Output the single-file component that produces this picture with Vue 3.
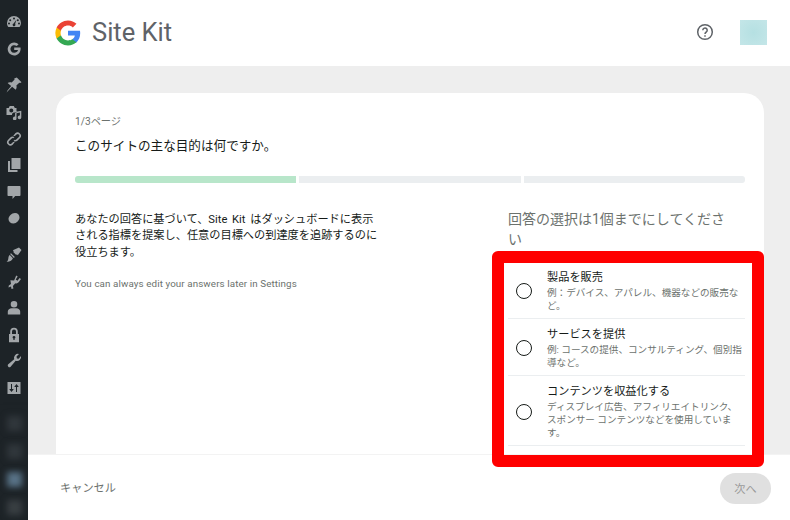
<script setup>
const menuGroups = [
  [
    { name: 'dashboard', d: 'M8 2a7 7 0 0 0-7 7c0 1.6.5 3 1.4 4h11.2A6.9 6.9 0 0 0 15 9a7 7 0 0 0-7-7zM8 3.600a1 1 0 1 1 0 2 1 1 0 0 1 0-2zM4.200 5.200a1 1 0 1 1 0 2 1 1 0 0 1 0-2zm7.600 0a1 1 0 1 1 0 2 1 1 0 0 1 0-2zM3 8.600a1 1 0 1 1 0 2 1 1 0 0 1 0-2zm10 0a1 1 0 1 1 0 2 1 1 0 0 1 0-2zM10.400 5.800l-1.300 4.100a1.400 1.400 0 1 1-1.500-.4z' },
    { name: 'google', d: 'M8.200 1.500a6.500 6.500 0 1 0 4.600 11.100c1.300-1.300 1.800-3.100 1.800-4.800 0-.5 0-.9-.1-1.300H8.200v2.600h3.800c-.4 1.700-1.900 2.700-3.800 2.700a3.800 3.800 0 1 1 2.500-6.700l1.900-1.900a6.400 6.400 0 0 0-4.400-1.700z' }
  ],
  [
    { name: 'pin', d: 'M10.800.5l4.700 4.700-1.300.9-.9-.4-2.900 2.900c.5 1.700.2 3.100-.7 4.100L6.100 9.800 1.500 14.500l-.9.900.9-1.800 3.700-4.700L1.600 6.100c1-1 2.400-1.200 4.100-.7l2.900-2.900-.4-.9z' },
    { name: 'media', d: 'M.5 4h2.200l1-2h4.100l1 2h1.700v4.600H7.800a2.200 2.200 0 0 0-1.800 2.400H.5zM5.300 4.600a2 2 0 1 0 0 4 2 2 0 0 0 0-4zM15.300 6.800v6.500a1.800 1.800 0 1 1-1.400-1.700V8.400l-3.400.8v5.200a1.800 1.800 0 1 1-1.400-1.700V7.900z' },
    { name: 'links', d: 'M9.300 2.300a3.400 3.400 0 0 1 4.800 4.800l-2.400 2.400a3.400 3.400 0 0 1-4.200.5l1.200-1.200a1.700 1.700 0 0 0 1.800-.5l2.400-2.400a1.700 1.700 0 0 0-2.400-2.400L8.900 5.100a4 4 0 0 0-1.700-.1zM6.700 13.700a3.400 3.400 0 0 1-4.800-4.800l2.400-2.400a3.400 3.400 0 0 1 4.200-.5L7.300 7.200a1.700 1.700 0 0 0-1.800.5l-2.400 2.400a1.700 1.700 0 0 0 2.400 2.400l1.600-1.600a4 4 0 0 0 1.700.1z' },
    { name: 'pages', d: 'M5.500 1h9v11h-9zM2 4h2v9h7.500v2H2z' },
    { name: 'comments', d: 'M2.500 2h11c.6 0 1 .4 1 1v8c0 .6-.4 1-1 1H9.200L6.500 15v-3h-4c-.6 0-1-.4-1-1V3c0-.6.4-1 1-1z' },
    { name: 'circle', d: 'M9 3c2.800 0 4.500 1.800 4.500 4.500S10.500 13.500 7.500 13.500 2.500 11.700 2.500 9 5.500 3 9 3z' }
  ],
  [
    { name: 'appearance', d: 'M13 .5l2.500 2.500-3.700 5.300-1-1-.6.6-3-3 .6-.6-1-1zM5 6.200l3.800 3.800-.9.900-3.800-3.800zM3.800 8.100l3.100 3.100c-.6 2-2.400 3.300-6.400 3.800 1.500-1 1.600-2.300 1.800-3.500.2-1.500.6-2.800 1.500-3.400z' },
    { name: 'plugins', d: 'M10.200 1.500l1.500 1.100-2 2.800 1.800 1.300 2-2.800 1.500 1.100-2.200 3.100c-.9 1.200-2.300 1.600-3.500 1.100L6.900 12l.5 2.400-1.900.7-.5-2.500-2.500 1 .3-2.200L5 10 4.400 6.200l3.700.2z' },
    { name: 'users', d: 'M8 1a3.300 3.300 0 1 1 0 6.600A3.300 3.300 0 0 1 8 1zM1.800 14.500v-3c0-1.800 1.900-3.200 3.700-3.200h5c1.800 0 3.700 1.400 3.700 3.200v3z' },
    { name: 'lock', d: 'M8 .8a3.800 3.800 0 0 1 3.800 3.800V7H13v8.200H3V7h1.200V4.600A3.800 3.800 0 0 1 8 .8zm0 1.800a2 2 0 0 0-2 2V7h4V4.600a2 2 0 0 0-2-2zM8 9a1.300 1.300 0 0 0-.6 2.500V13h1.200v-1.500A1.300 1.300 0 0 0 8 9z' },
    { name: 'tools', d: 'M15 3a4 4 0 0 1-5.300 4.700l-5.300 6.200a1.700 1.700 0 0 1-2.400-2.300l6.200-5.400A4 4 0 0 1 13 1l-2.500 2.500.4 1.900 1.800.4z' },
    { name: 'settings', d: 'M1.500 2h13v12h-13zM5 4v5H3.200l2.300 3 2.300-3H6V4zm5.500 0L8.200 7H10v5h1V7h1.800z' }
  ]
]

const blurredItems = ['#30363b', '#30363b', '#587286', '#383e42']

const pages = [true, false, false]

const options = [
  { title: '製品を販売', desc: '例：デバイス、アパレル、機器などの販売など。' },
  { title: 'サービスを提供', desc: '例: コースの提供、コンサルティング、個別指導など。' },
  { title: 'コンテンツを収益化する', desc: 'ディスプレイ広告、アフィリエイトリンク、スポンサー コンテンツなどを使用しています。' }
]
</script>

<template>
  <div class="page">
    <aside class="sidebar">
      <div v-for="(group, i) in menuGroups" :key="i" class="menu-group">
        <div v-for="item in group" :key="item.name" class="menu-item">
          <svg width="16" height="16" viewBox="0 0 16 16" fill="#a2a6a9" fill-rule="evenodd">
            <path :d="item.d" />
          </svg>
        </div>
      </div>
      <div class="blurred">
        <span
          v-for="(color, i) in blurredItems"
          :key="i"
          class="blur-dot"
          :style="{ background: color }"
        ></span>
      </div>
    </aside>

    <div class="main">
      <header class="topbar">
        <div class="logo">
          <svg width="26" height="26" viewBox="0 0 48 48">
            <path fill="#4285f4" d="M46.500 24.500c0-1.600-.1-3.100-.4-4.500H24v8.700h12.600c-.5 2.900-2.200 5.400-4.700 7v5.800h7.600c4.400-4.100 7-10.100 7-17z" />
            <path fill="#34a853" d="M24 47c6.300 0 11.700-2.100 15.500-5.700l-7.600-5.800c-2.100 1.400-4.800 2.200-7.900 2.200-6.100 0-11.200-4.100-13-9.600H3.100v6C6.900 41.600 14.800 47 24 47z" />
            <path fill="#fbbc05" d="M11 28.100c-.5-1.400-.7-2.900-.7-4.100s.3-2.700.7-4.100v-6H3.100C1.500 17.100.6 20.500.6 24s.9 6.900 2.500 10.100z" />
            <path fill="#ea4335" d="M24 10.300c3.400 0 6.500 1.200 8.900 3.500l6.700-6.700C35.600 3.300 30.300 1 24 1 14.800 1 6.900 6.400 3.100 13.900l7.900 6C12.800 14.400 17.900 10.300 24 10.300z" />
          </svg>
          <span class="logo-text">Site Kit</span>
        </div>
        <div class="topbar-right">
          <svg class="help" width="18" height="18" viewBox="0 0 18 18" fill="none" stroke="#5f6368">
            <circle cx="9" cy="9" r="7.300" stroke-width="1.500" />
            <path d="M6.800 7.200a2.200 2.200 0 1 1 3.500 1.800c-.8.500-1.300 1-1.300 2" stroke-width="1.500" />
            <path d="M9 12.200v1.500" stroke-width="1.500" />
          </svg>
          <div class="avatar"></div>
        </div>
      </header>

      <main class="content">
        <section class="card">
          <p class="page-count">1/3ページ</p>
          <h1 class="card-title">このサイトの主な目的は何ですか。</h1>
          <div class="progress">
            <span v-for="(done, i) in pages" :key="i" class="segment" :class="{ done }"></span>
          </div>
          <div class="columns">
            <div class="intro">
              <p class="intro-text">あなたの回答に基づいて、Site Kit はダッシュボードに表示される指標を提案し、任意の目標への到達度を追跡するのに役立ちます。</p>
              <p class="intro-note">You can always edit your answers later in Settings</p>
            </div>
            <div class="choices">
              <h2 class="choices-title">回答の選択は1個までにしてください</h2>
              <label v-for="option in options" :key="option.title" class="option">
                <span class="radio"></span>
                <span class="option-body">
                  <span class="option-title">{{ option.title }}</span>
                  <span class="option-desc">{{ option.desc }}</span>
                </span>
              </label>
            </div>
          </div>
        </section>
      </main>

      <footer class="footer">
        <button class="cancel">キャンセル</button>
        <button class="next" disabled>次へ</button>
      </footer>

      <div class="highlight"></div>
    </div>
  </div>
</template>

<style>
html,
body {
  margin: 0;
  overflow: hidden;
}
</style>

<style scoped>
.page {
  display: flex;
  width: 790px;
  height: 520px;
  overflow: hidden;
  font-family: Roboto, "Noto Sans CJK JP", sans-serif;
  background: #fff;
}

.sidebar {
  position: relative;
  flex: 0 0 28px;
  width: 28px;
  padding-top: 9px;
  box-sizing: border-box;
  background: #1d2327;
}

.menu-group {
  display: flex;
  flex-direction: column;
  margin-bottom: 10px;
}

.menu-item {
  display: flex;
  align-items: center;
  justify-content: center;
  height: 26.6px;
}

.blurred {
  position: absolute;
  top: 405px;
  left: 0;
  width: 29px;
  height: 115px;
  padding-top: 11px;
  box-sizing: border-box;
  display: flex;
  flex-direction: column;
  align-items: center;
  gap: 13px;
  background: #1d2327;
  box-shadow: 3px 6px 6px rgba(29, 35, 39, 0.6);
}

.blur-dot {
  width: 15px;
  height: 15px;
  filter: blur(3px);
}

.main {
  position: relative;
  flex: 1;
  display: flex;
  flex-direction: column;
  min-width: 0;
}

.topbar {
  flex: 0 0 66px;
  display: flex;
  align-items: center;
  justify-content: space-between;
  padding: 0 23px 0 27px;
  background: #fff;
}

.logo {
  display: flex;
  align-items: center;
  gap: 11px;
}

.logo-text {
  margin-top: -2px;
  font-family: Roboto, sans-serif;
  font-size: 25.5px;
  color: #5f6368;
}

.topbar-right {
  display: flex;
  align-items: center;
  gap: 26px;
}

.avatar {
  width: 27px;
  height: 25px;
  margin-top: -2px;
  background: radial-gradient(circle, #b5e0e2, #c4e6e8);
}

.help {
  margin-top: -2px;
}

.content {
  flex: 1;
  min-height: 0;
  padding: 27px 26px 0 28px;
  background: #eeeeee;
  overflow: hidden;
}

.card {
  height: 100%;
  box-sizing: border-box;
  padding: 20px 19px 0;
  background: #fff;
  border-radius: 20px 20px 0 0;
}

.page-count {
  margin: 0;
  font-size: 10.2px;
  line-height: 15px;
  padding-top: 1px;
  color: #6c726e;
}

.card-title {
  margin: 7px 0 0;
  font-size: 12.6px;
  line-height: 20px;
  font-weight: 400;
  color: #161b18;
}

.progress {
  display: flex;
  gap: 3px;
  margin-top: 20px;
}

.segment {
  flex: 1;
  height: 7px;
  background: #ebeef0;
}

.segment:first-child {
  border-radius: 3px 0 0 3px;
}

.segment:last-child {
  border-radius: 0 3px 3px 0;
}

.segment.done {
  background: #b8e6ca;
}

.columns {
  display: flex;
  justify-content: space-between;
  margin-top: 27px;
}

.intro {
  width: 304px;
  padding-top: 2px;
}

.intro-text {
  margin: 0;
  font-size: 11.2px;
  line-height: 16.3px;
  word-spacing: 2px;
  color: #161b18;
}

.intro-note {
  margin: 16px 0 0;
  font-size: 9.800px;
  line-height: 14px;
  letter-spacing: 0.1px;
  color: #6c726e;
}

.choices {
  width: 237px;
}

.choices-title {
  max-width: 228px;
  margin: 0 0 13px;
  font-size: 14px;
  line-height: 19.500px;
  font-weight: 400;
  color: #6c726e;
}

.option {
  display: flex;
  align-items: center;
  gap: 15px;
  padding: 8px 0 6px 8px;
  border-bottom: 1px solid #ebeef0;
}

.radio {
  flex: 0 0 16px;
  width: 16px;
  height: 16px;
  box-sizing: border-box;
  border: 1.500px solid #161b18;
  border-radius: 50%;
}

.option-body {
  display: flex;
  flex-direction: column;
  min-width: 0;
  padding-right: 2px;
}

.option-title {
  font-size: 11.2px;
  line-height: 16px;
  color: #161b18;
}

.option-desc {
  font-size: 9.600px;
  line-height: 13px;
  color: #6c726e;
}

.footer {
  flex: 0 0 66px;
  display: flex;
  align-items: center;
  justify-content: space-between;
  padding: 1px 19px 0 32px;
  box-sizing: border-box;
  background: #fff;
  border-top: 1px solid #f3f3f3;
}

.cancel {
  padding: 0 0 2px;
  border: 0;
  background: none;
  font: inherit;
  font-size: 11.2px;
  color: #6c726e;
}

.next {
  width: 51px;
  height: 31px;
  padding: 0;
  border: 0;
  border-radius: 16px;
  background: #e0e0e0;
  font: inherit;
  font-size: 11.2px;
  color: #9a9a9a;
}

.highlight {
  position: absolute;
  left: 464px;
  top: 251px;
  width: 272px;
  height: 216px;
  box-sizing: border-box;
  border: 12px solid #ff0000;
  border-radius: 6px;
}
</style>
